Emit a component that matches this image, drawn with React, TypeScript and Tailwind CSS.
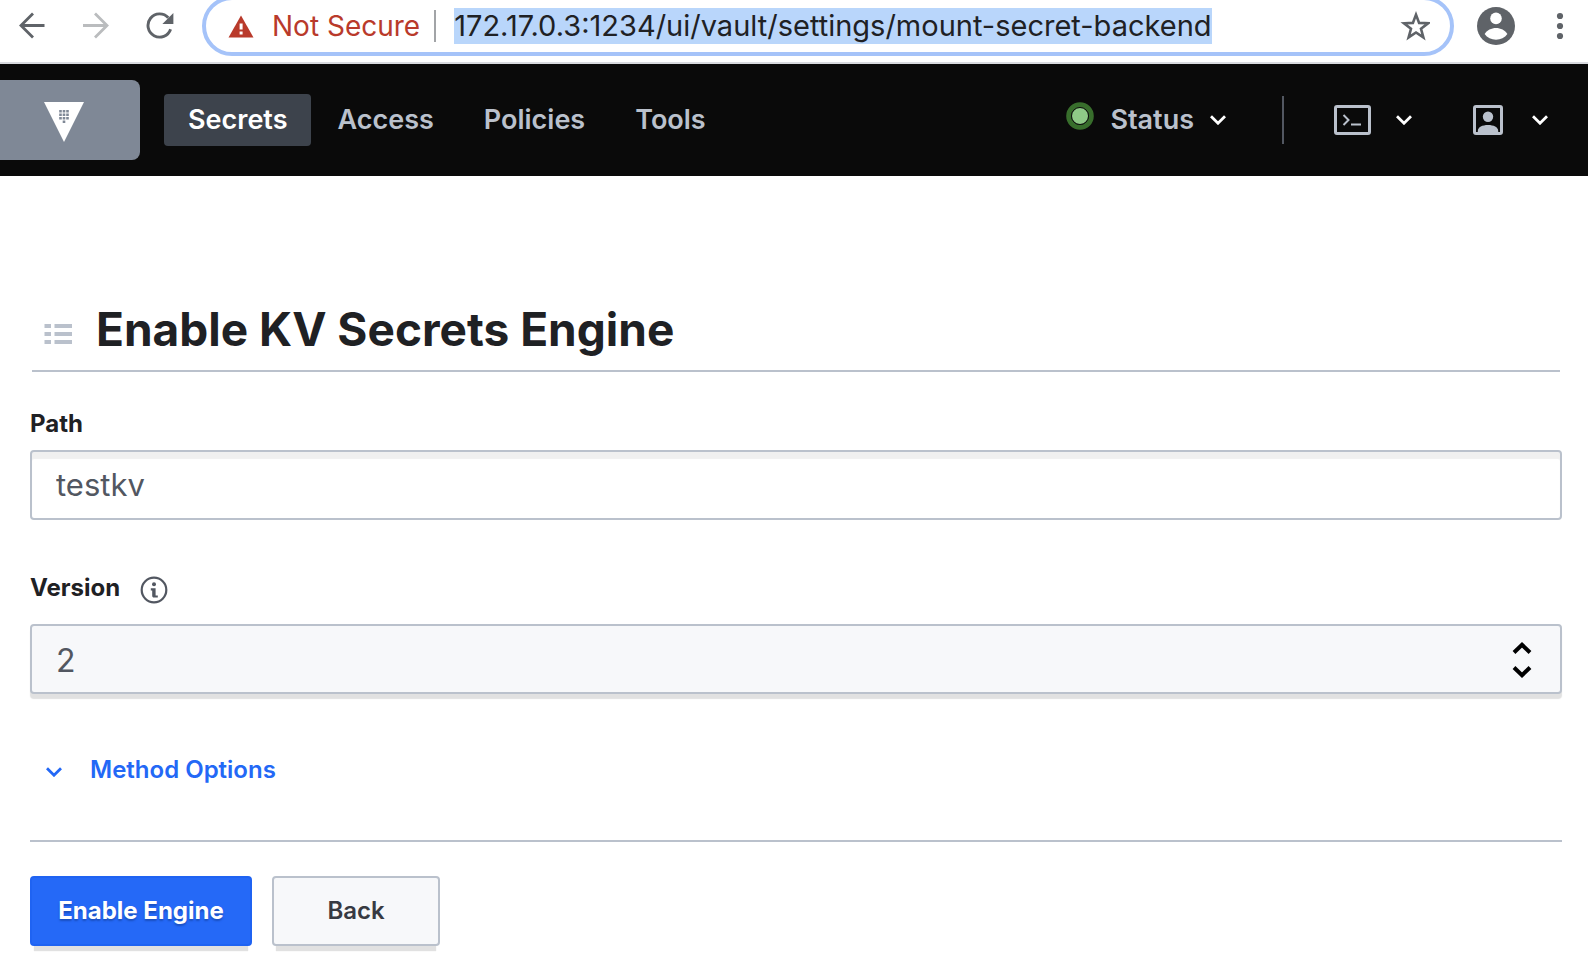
import { useEffect, useRef } from "react";

function Caret({ className }: { className: string }) {
  return (
    <svg className={className} width="16" height="10" viewBox="0 0 16 10" fill="none" stroke="currentColor" strokeWidth="2.8" aria-hidden="true">
      <path d="M1 1.2 8 8.2l7-7" />
    </svg>
  );
}

function BrowserBar() {
  const address = useRef<HTMLInputElement>(null);

  useEffect(() => {
    address.current?.focus();
    address.current?.select();
  }, []);

  return (
    <div className="flex h-16 items-start overflow-hidden border-b-2 border-[#d8dadf] bg-white pr-6 pl-4 text-[#5f6368]">
      <button type="button" aria-label="Go back" className="mt-2.5 flex size-8 items-center justify-center">
        <svg width="28" height="28" viewBox="0 0 28 28" fill="none" stroke="currentColor" strokeWidth="2.8" aria-hidden="true">
          <path d="M26.500 13.500H3M15 1.500l-12 12 12 12" />
        </svg>
      </button>
      <button type="button" aria-label="Go forward" className="mt-2.5 ml-8 flex size-8 items-center justify-center text-[#babcbe]">
        <svg width="28" height="28" viewBox="0 0 28 28" fill="none" stroke="currentColor" strokeWidth="2.8" aria-hidden="true">
          <path d="M1 13.500h24M13 1.500l12 12-12 12" />
        </svg>
      </button>
      <button type="button" aria-label="Reload" className="mt-2.5 ml-8 flex size-8 items-center justify-center">
        <svg width="28" height="28" viewBox="0 0 28 28" aria-hidden="true">
          <path d="M24.6 17.2A11.6 11.6 0 1 1 22.3 5.8" fill="none" stroke="currentColor" strokeWidth="2.9" />
          <path d="M27.4 1v11H16.4z" fill="currentColor" />
        </svg>
      </button>
      <div className="-mt-1 ml-6.5 flex h-15 min-w-0 flex-1 items-center rounded-full border-4 border-[#a5c3f9] px-5">
        <svg className="ml-0.5 shrink-0" width="26" height="23" viewBox="0 0 26 23" aria-hidden="true">
          <path d="M13 0.5 25.5 22.5H.5z" fill="#b93a2b" />
          <path d="M11.6 8.5h3v6h-3zM11.6 16.5h3v3h-3z" fill="#fff" />
        </svg>
        <span className="ml-4.5 text-[28px] leading-9 whitespace-nowrap text-[#b93a2b]">Not Secure</span>
        <span className="ml-3.5 h-8 w-0.5 shrink-0 bg-[#a2a4a7]" />
        <input
          ref={address}
          aria-label="Address"
          defaultValue="172.17.0.3:1234/ui/vault/settings/mount-secret-backend"
          className="ml-4.5 h-9 min-w-0 flex-1 bg-transparent text-[29px] leading-9 text-[#202124] outline-none selection:bg-[#b9d6fb] selection:text-[#202124]"
        />
        <button type="button" aria-label="Bookmark this tab" className="shrink-0 pl-4">
          <svg width="32" height="32" viewBox="0 0 32 32" fill="none" stroke="currentColor" strokeWidth="2.6" aria-hidden="true">
            <path d="m18 4.600 3.100 8.300 8.900.4-7 5.500 2.400 8.600-7.400-4.900-7.400 4.900 2.400-8.600-7-5.500 8.900-.4z" />
          </svg>
        </button>
      </div>
      <button type="button" aria-label="Profile" className="mt-1.5 ml-5.5">
        <svg width="40" height="40" viewBox="0 0 40 40" aria-hidden="true">
          <circle cx="20" cy="20" r="19" fill="currentColor" />
          <circle cx="20" cy="12.4" r="5.8" fill="#fff" />
          <path d="M8.6 28c2.2-3.800 6.900-6 11.400-6s9.200 2.200 11.400 6c-2.600 3.700-6.800 5.700-11.400 5.700S11.200 31.700 8.600 28z" fill="#fff" />
        </svg>
      </button>
      <button type="button" aria-label="Menu" className="mt-2 ml-10">
        <svg width="8" height="36" viewBox="0 0 8 36" fill="currentColor" aria-hidden="true">
          <circle cx="4" cy="8" r="3.1" />
          <circle cx="4" cy="18" r="3.1" />
          <circle cx="4" cy="28" r="3.1" />
        </svg>
      </button>
    </div>
  );
}

function NavBar() {
  const link = "rounded px-6 py-2 text-[27px] leading-9 font-semibold";
  return (
    <header className="flex h-28 items-center bg-[#0a0a0a] pr-10 text-[#bac1cc]">
      <a href="#home" aria-label="Vault" className="flex h-20 w-35 items-center rounded-r-lg bg-[#7f8896] pl-11">
        <svg className="mt-1" width="40" height="40" viewBox="0 0 40 40" aria-hidden="true">
          <path d="M0 0h40L20 40z" fill="#fff" />
          <path
            d="M15.2 8h2.600v2.600h-2.600zM18.700 8h2.600v2.600h-2.600zM22.200 8h2.600v2.600h-2.600zM15.200 11.500h2.600v2.600h-2.600zM18.700 11.500h2.600v2.600h-2.600zM22.200 11.500h2.600v2.600h-2.600zM15.200 15h2.600v2.600h-2.600zM18.700 15h2.600v2.600h-2.600zM22.200 15h2.600v2.600h-2.600zM18.700 18.500h2.600v2.600h-2.600z"
            fill="#7f8896"
          />
        </svg>
      </a>
      <nav className="ml-6 flex gap-0.5">
        <a href="#secrets" className={`${link} bg-[#3d434c] text-white`}>Secrets</a>
        <a href="#access" className={link}>Access</a>
        <a href="#policies" className={link}>Policies</a>
        <a href="#tools" className={link}>Tools</a>
      </nav>
      <div className="ml-auto flex items-center">
        <button type="button" className="flex items-center text-[27px] leading-9 font-semibold">
          <svg className="mr-4 -mt-2" width="28" height="28" viewBox="0 0 28 28" aria-hidden="true">
            <circle cx="14" cy="14" r="11.3" fill="none" stroke="#386e2c" strokeWidth="5" />
            <circle cx="14" cy="14" r="8.500" fill="#8fca87" stroke="#0a0a0a" strokeWidth="1" />
          </svg>
          Status
          <Caret className="ml-4 text-white" />
        </button>
        <span className="ml-14 h-12 w-0.5 bg-[#525761]" />
        <button type="button" aria-label="Console" className="ml-12.5 flex items-center">
          <svg width="38" height="32" viewBox="0 0 38 32" fill="none" stroke="currentColor" aria-hidden="true">
            <rect x="1.500" y="2.500" width="34" height="27" rx="1.500" strokeWidth="3" />
            <path d="m9.500 11 5 5-5 5M17 20.500h10" strokeWidth="2" />
          </svg>
          <Caret className="ml-6 text-white" />
        </button>
        <button type="button" aria-label="Account" className="ml-15 flex items-center">
          <svg width="32" height="32" viewBox="0 0 32 32" aria-hidden="true">
            <rect x="2.500" y="2.500" width="27" height="27" rx="1.500" fill="none" stroke="currentColor" strokeWidth="3" />
            <circle cx="16" cy="12.800" r="5.200" fill="currentColor" />
            <path d="M5.800 29.500v-2.500c0-4 4.600-6 10.200-6s10.200 2 10.200 6v2.500z" fill="currentColor" />
          </svg>
          <Caret className="ml-7 text-white" />
        </button>
      </div>
    </header>
  );
}

export default function App() {
  return (
    <div className="min-h-screen bg-white font-['Inter',sans-serif] text-[#1f2124]">
      <BrowserBar />
      <NavBar />
      <main className="pt-[122px] pr-[26px] pl-[30px]">
        <div className="mx-0.5 flex h-[74px] items-start border-b-2 border-[#bac1cc] pl-3">
          <svg className="mt-[26px] shrink-0" width="28" height="20" viewBox="0 0 28 20" fill="#bac1cc" aria-hidden="true">
            <path d="M.5 0h6.500v4H.5zM10.500 0H28v4H10.500zM.5 8h6.500v4H.5zM10.500 8H28v4H10.500zM.5 16h6.500v4H.5zM10.500 16H28v4H10.500z" />
          </svg>
          <h1 className="ml-6 text-[46px] leading-[62px] font-bold">Enable KV Secrets Engine</h1>
        </div>

        <form onSubmit={(event) => event.preventDefault()}>
          <label htmlFor="path" className="mt-8 block text-2xl leading-10 font-bold">Path</label>
          <input
            id="path"
            defaultValue="testkv"
            className="mt-1.5 block h-[70px] w-full rounded border-2 border-[#bac1cc] bg-white px-6 pb-0.5 text-[31px] text-[#525761] shadow-[inset_0_7px_1px_0_#f0f0f0] outline-none"
          />

          <div className="mt-12 flex h-10 items-center">
            <label htmlFor="version" className="text-2xl leading-10 font-bold">Version</label>
            <svg className="mt-1 ml-5" width="28" height="28" viewBox="0 0 28 28" aria-hidden="true">
              <circle cx="14" cy="14" r="12.300" fill="none" stroke="#525761" strokeWidth="2.200" />
              <circle cx="14" cy="8.300" r="2" fill="#525761" />
              <path d="M10.800 12.200h4.800v7.200h2.200v2.200h-3.800c-1.200 0-1.800-.6-1.800-1.800v-5.400h-1.400z" fill="#525761" />
            </svg>
          </div>
          <div className="relative mt-4">
            <select
              id="version"
              defaultValue="2"
              className="block h-[70px] w-full appearance-none rounded border-2 border-[#bac1cc] bg-[#f7f8fa] px-6 pt-1 text-[32px] text-[#525761] shadow-[0_5px_1px_0_#e1e1e1] outline-none"
            >
              <option value="2">2</option>
              <option value="1">1</option>
            </select>
            <svg className="pointer-events-none absolute top-[17px] right-[30px]" width="20" height="38" viewBox="0 0 20 38" fill="none" stroke="#000" strokeWidth="4" aria-hidden="true">
              <path d="m2 11.500 8-7.700 8 7.700M2 26.500l8 7.700 8-7.700" />
            </svg>
          </div>

          <button type="button" className="mt-14 ml-4 flex h-10 items-center text-2xl font-semibold text-[#2368f6]">
            <Caret className="mt-1 mr-7" />
            Method Options
          </button>

          <div className="mt-[50px] flex gap-5 border-t-2 border-[#bac1cc] pt-[34px]">
            <button type="submit" className="h-[70px] w-[222px] rounded border-2 border-[#1f63f2] bg-[#2569f7] text-2xl font-bold text-white shadow-[0_9px_1px_-4px_#e1e1e1] [text-shadow:0_2px_2px_#1a4fbf]">
              Enable Engine
            </button>
            <button type="button" className="h-[70px] w-[168px] rounded border-2 border-[#bac1cc] bg-[#f7f8fa] text-2xl font-semibold text-[#373a42] shadow-[0_9px_1px_-4px_#e1e1e1]">
              Back
            </button>
          </div>
        </form>
      </main>
    </div>
  );
}
